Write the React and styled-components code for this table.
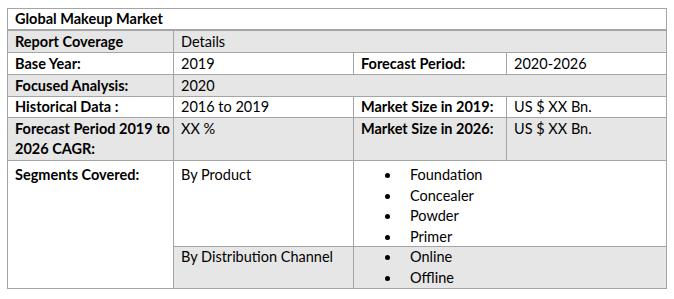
import React from "react";
import styled, { createGlobalStyle } from "styled-components";

const Global = createGlobalStyle`
  html, body { margin: 0; padding: 0; background: #ffffff; }
  body { font-family: Lato, "Open Sans", sans-serif; color: #000; }
`;

const Page = styled.div`
  padding: 8px 0 0 7px;
`;

const Table = styled.div`
  width: 658px;
  border: 1px solid #a5a5a5;
  font-size: 14.5px;
  line-height: 20px;
`;

const Title = styled.div`
  height: 20px;
  padding: 0 7px;
  font-weight: 700;
  border-bottom: 2px solid #a5a5a5;
  background: #fff;
`;

const Grid = styled.div`
  display: grid;
  grid-template-columns: 165px 179px 152px 159px;
  grid-template-rows: 21px 21px 21px 20px 42px 85px 41px;
  gap: 1px;
  background: #a5a5a5;
`;

const Cell = styled.div`
  background: ${(p) => (p.$shade ? "#e7e6e6" : "#ffffff")};
  font-weight: ${(p) => (p.$bold ? 700 : 400)};
  padding: ${(p) => p.$top ?? 1}px 2px 0 7px;
  grid-column: ${(p) => p.$col || "auto"};
  grid-row: ${(p) => p.$row || "auto"};
`;

const List = styled.ul`
  list-style: none;
  margin: 0;
  padding: 0 0 0 49px;
`;

const Item = styled.li`
  position: relative;
  line-height: 20.5px;
  &::before {
    content: "";
    position: absolute;
    left: -25px;
    top: 8px;
    width: 5px;
    height: 5px;
    border-radius: 50%;
    background: #000;
  }
`;

export default function App() {
  return (
    <Page>
      <Global />
      <Table>
        <Title>Global Makeup Market</Title>
        <Grid>
          <Cell $shade $bold>Report Coverage</Cell>
          <Cell $shade $col="2 / 5">Details</Cell>

          <Cell $bold>Base Year:</Cell>
          <Cell>2019</Cell>
          <Cell $bold>Forecast Period:</Cell>
          <Cell>2020-2026</Cell>

          <Cell $shade $bold>Focused Analysis:</Cell>
          <Cell $shade $col="2 / 5">2020</Cell>

          <Cell $bold $top={0}>Historical Data :</Cell>
          <Cell $top={0}>2016 to 2019</Cell>
          <Cell $bold $top={0}>Market Size in 2019:</Cell>
          <Cell $top={0}>US $ XX Bn.</Cell>

          <Cell $shade $bold>Forecast Period 2019 to 2026 CAGR:</Cell>
          <Cell $shade>XX %</Cell>
          <Cell $shade $bold>Market Size in 2026:</Cell>
          <Cell $shade>US $ XX Bn.</Cell>

          <Cell $bold $row="6 / 8" $top={4}>Segments Covered:</Cell>
          <Cell $top={4}>By Product</Cell>
          <Cell $col="3 / 5" $top={4}>
            <List>
              <Item>Foundation</Item>
              <Item>Concealer</Item>
              <Item>Powder</Item>
              <Item>Primer</Item>
            </List>
          </Cell>

          <Cell $shade $top={0}>By Distribution Channel</Cell>
          <Cell $shade $col="3 / 5" $top={0}>
            <List>
              <Item>Online</Item>
              <Item>Offline</Item>
            </List>
          </Cell>
        </Grid>
      </Table>
    </Page>
  );
}
